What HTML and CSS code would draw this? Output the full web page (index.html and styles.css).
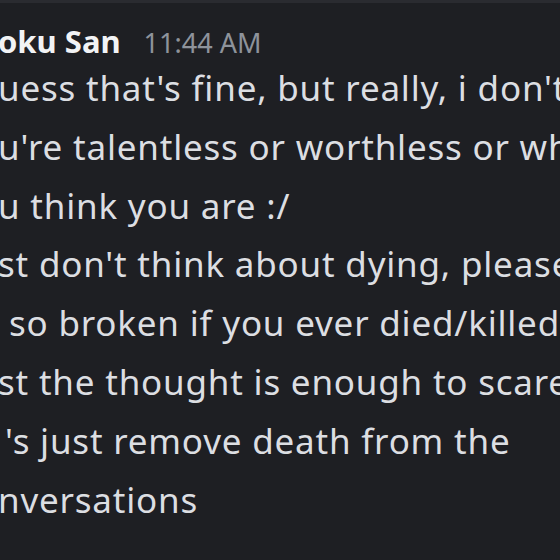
FILE: index.html
```html
<!DOCTYPE html>
<html>
<head>
<meta charset="utf-8">
<link rel="stylesheet" href="styles.css">
</head>
<body>
<div class="topbar"></div>
<div class="message">
  <div class="header">
    <span class="name">oku San</span>
    <span class="time">11:44 AM</span>
  </div>
  <div class="content">
    <div class="line">uess that's fine, but really, i don't think</div>
    <div class="line">u're talentless or worthless or whatever</div>
    <div class="line">u think you are :/</div>
    <div class="line">st don't think about dying, please</div>
    <div class="line line-space">so broken if you ever died/killed yourself</div>
    <div class="line">st the thought is enough to scare me</div>
    <div class="line line-apos">'s just remove death from the</div>
    <div class="line">nversations</div>
  </div>
</div>
</body>
</html>
```

FILE: styles.css
```css
html, body {
  margin: 0;
  padding: 0;
  background: #1e1f23;
  width: 560px;
  height: 560px;
  overflow: hidden;
}
.topbar {
  height: 3px;
  background: #2a2b30;
}
.message {
  margin-left: -2px;
  padding-top: 17px;
  font-family: "Noto Sans", "Open Sans", sans-serif;
  white-space: nowrap;
  overflow: hidden;
}
.header {
  display: flex;
  align-items: baseline;
  gap: 23px;
  height: 40px;
}
.name {
  color: #f2f3f5;
  font-weight: 700;
  font-size: 31px;
}
.time {
  color: #8e939b;
  font-size: 27px;
}
.content {
  color: #dcdee2;
  font-size: 35px;
  letter-spacing: 0.8px;
  line-height: 58.8px;
  margin-top: -1px;
}
.line-space {
  padding-left: 11px;
}
.line-apos {
  padding-left: 7px;
}
```
